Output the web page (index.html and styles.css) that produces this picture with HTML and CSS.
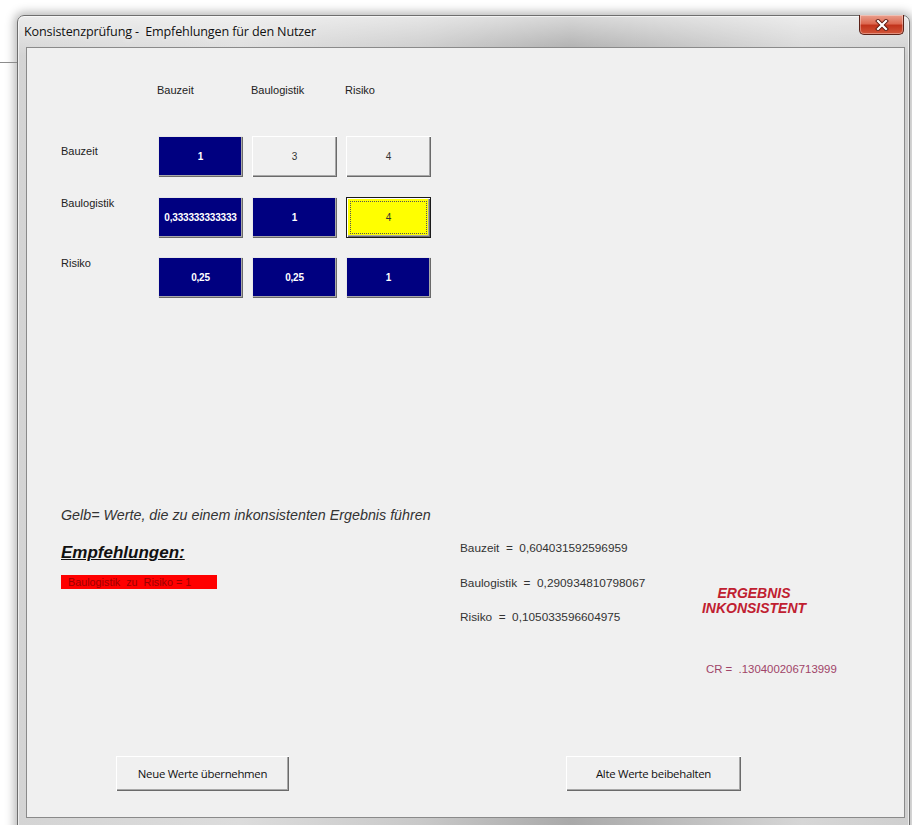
FILE: index.html
```html
<!DOCTYPE html>
<html lang="de">
<head>
<meta charset="utf-8">
<title>Konsistenzprüfung</title>
<link rel="stylesheet" href="styles.css">
</head>
<body>
<div class="window">
  <div class="titlebar">
    <span class="title">Konsistenzprüfung -&nbsp; Empfehlungen für den Nutzer</span>
    <button class="close" type="button" aria-label="Schließen">
      <svg width="14" height="12" viewBox="0 0 14 12">
        <path d="M3 2 L11 10 M11 2 L3 10" stroke="#5a1a10" stroke-width="4" stroke-linecap="square"/>
        <path d="M3 2 L11 10 M11 2 L3 10" stroke="#ffffff" stroke-width="2.2" stroke-linecap="square"/>
      </svg>
    </button>
  </div>

  <div class="client">
    <div class="matrix">
      <div class="corner"></div>
      <div class="head">Bauzeit</div>
      <div class="head">Baulogistik</div>
      <div class="head">Risiko</div>

      <div class="rowlabel rowlabel-first">Bauzeit</div>
      <div class="cell cell-navy">1</div>
      <div class="cell cell-plain">3</div>
      <div class="cell cell-plain">4</div>

      <div class="rowlabel">Baulogistik</div>
      <div class="cell cell-navy">0,333333333333</div>
      <div class="cell cell-navy">1</div>
      <div class="cell cell-warn"><span class="focus">4</span></div>

      <div class="rowlabel">Risiko</div>
      <div class="cell cell-navy">0,25</div>
      <div class="cell cell-navy">0,25</div>
      <div class="cell cell-navy">1</div>
    </div>

    <p class="note">Gelb= Werte, die zu einem inkonsistenten Ergebnis führen</p>

    <div class="lower">
      <div class="advice">
        <h2 class="advice-title">Empfehlungen:</h2>
        <div class="advice-item">Baulogistik&nbsp; zu&nbsp; Risiko = 1</div>
      </div>
      <div class="weights">
        <div class="weight">Bauzeit&nbsp; =&nbsp; 0,604031592596959</div>
        <div class="weight">Baulogistik&nbsp; =&nbsp; 0,290934810798067</div>
        <div class="weight">Risiko&nbsp; =&nbsp; 0,105033596604975</div>
      </div>
      <div class="verdict">
        <div class="verdict-text">ERGEBNIS<br>INKONSISTENT</div>
        <div class="cr">CR =&nbsp; .130400206713999</div>
      </div>
    </div>

    <div class="actions">
      <button class="btn btn-new" type="button">Neue Werte übernehmen</button>
      <button class="btn btn-old" type="button">Alte Werte beibehalten</button>
    </div>
  </div>
</div>
</body>
</html>
```
FILE: styles.css
```css
html, body {
  margin: 0;
  height: 100%;
}

body {
  background: #ffffff;
  padding: 15px 0 0 17px;
  box-sizing: border-box;
  overflow: hidden;
  position: relative;
  font-family: "Liberation Sans", Arial, sans-serif;
  color: #222;
}

/* line of the desktop item peeking out behind the window */
body::before {
  content: "";
  position: absolute;
  left: 0;
  top: 62px;
  width: 17px;
  height: 1px;
  background: #8c8c8c;
}

/* ---------- window frame ---------- */
.window {
  width: 893px;
  height: 820px;
  box-sizing: border-box;
  border: 1px solid #6e6e6e;
  border-radius: 7px 7px 0 0;
  background:
    linear-gradient(180deg, rgba(255,255,255,0.55) 0px, rgba(255,255,255,0) 40px),
    linear-gradient(90deg, #d4d4d4 0%, #dcdcdc 25%, #c9c9c9 45%, #a9a9a9 62%, #bdbdbd 74%, #d6d6d6 88%, #cfcfcf 100%);
  box-shadow: 0 0 10px 3px rgba(0,0,0,0.28), inset 0 0 0 1px rgba(255,255,255,0.6);
  padding: 0 4px 0 8px;
  display: flex;
  flex-direction: column;
}

.titlebar {
  height: 31px;
  display: flex;
  align-items: flex-start;
  flex: none;
}

.title {
  font-family: "Open Sans", "Noto Sans", sans-serif;
  font-size: 12.6px;
  color: #111;
  margin: 7px 0 0 -2px;
  letter-spacing: -0.15px;
  text-shadow: 0 0 6px rgba(255,255,255,0.9);
}

.close {
  margin-left: auto;
  margin-top: -1px;
  margin-right: 1px;
  width: 45px;
  height: 20px;
  padding: 0;
  border: 1px solid #5b2218;
  border-top: none;
  border-radius: 0 0 5px 5px;
  background: linear-gradient(180deg, #eaa08e 0%, #dd6a52 45%, #c2341c 55%, #d2563a 100%);
  box-shadow: inset 0 0 0 1px rgba(255,255,255,0.35);
  display: flex;
  align-items: center;
  justify-content: center;
}

/* ---------- client area ---------- */
.client {
  height: 771px;
  box-sizing: border-box;
  background: #f0f0f0;
  border: 1px solid #8a8a8a;
  padding: 35px 0 0 34px;
  display: flex;
  flex-direction: column;
}

.matrix {
  display: grid;
  grid-template-columns: 88px 85px 85px 85px;
  grid-template-rows: 33.5px 41px 41px 41px;
  column-gap: 9px;
  row-gap: 19.5px;
  align-items: start;
  font-size: 11px;
}

.head {
  line-height: 14px;
  color: #222;
  margin-left: -1px;
}

.rowlabel {
  line-height: 12px;
  color: #222;
}

.rowlabel-first {
  padding-top: 9px;
}

.cell {
  height: 41px;
  box-sizing: border-box;
  display: flex;
  align-items: center;
  justify-content: center;
  font-size: 10px;
  font-weight: bold;
  letter-spacing: -0.2px;
}

.cell-navy {
  background: #000080;
  color: #ffffff;
  box-shadow: inset 1px 1px 0 #e8e8e8, inset -1px -1px 0 #6a6a6a, inset -2px -2px 0 #a8a8a8;
}

.cell-plain {
  background: #f0f0f0;
  color: #333;
  font-weight: normal;
  box-shadow: inset 1px 1px 0 #ffffff, inset -1px -1px 0 #6a6a6a, inset -2px -2px 0 #a8a8a8;
}

.cell-warn {
  background: #ffff00;
  color: #333;
  font-weight: normal;
  border: 1px solid #1a1a1a;
  box-shadow: inset 1px 1px 0 #ffffff, inset -1px -1px 0 #6a6a6a, inset -2px -2px 0 #a8a8a8;
  padding: 3px;
}

.focus {
  flex: 1;
  align-self: stretch;
  display: flex;
  align-items: center;
  justify-content: center;
  border: 1px dotted #555;
}

/* ---------- lower part ---------- */
.note {
  margin: 209px 0 0 0;
  font-size: 14.3px;
  line-height: 16px;
  font-style: italic;
  color: #333;
}

.lower {
  margin-top: 18px;
  display: grid;
  grid-template-columns: 399px 241px 180px;
  align-items: start;
}

.advice-title {
  margin: 2px 0 0 0;
  font-size: 17px;
  line-height: 20px;
  font-weight: bold;
  font-style: italic;
  text-decoration: underline;
  color: #111;
}

.advice-item {
  margin-top: 12px;
  width: 156px;
  height: 14px;
  box-sizing: border-box;
  padding-left: 7px;
  background: #ff0000;
  color: #9a0000;
  font-size: 10.8px;
  line-height: 14px;
}

.weights {
  display: flex;
  flex-direction: column;
  gap: 20.5px;
  font-size: 11.8px;
  line-height: 14px;
  color: #333;
}

.verdict-text {
  margin-top: 44.5px;
  width: 106px;
  text-align: center;
  font-size: 14px;
  line-height: 15px;
  font-weight: bold;
  font-style: italic;
  color: #c02030;
}

.cr {
  margin: 46.5px 0 0 5px;
  font-size: 11.4px;
  line-height: 14px;
  color: #a04468;
}

/* ---------- buttons ---------- */
.actions {
  margin: 80px 0 0 55px;
  display: flex;
  gap: 277px;
}

.btn {
  height: 35px;
  padding: 0;
  background: #f0f0f0;
  border: none;
  box-shadow: inset 1px 1px 0 #ffffff, inset -1px -1px 0 #6a6a6a, inset -2px -2px 0 #a8a8a8;
  font-family: "Open Sans", "Noto Sans", sans-serif;
  font-size: 11.4px;
  letter-spacing: -0.3px;
  color: #111;
}

.btn-new {
  width: 173px;
}

.btn-old {
  width: 175px;
}
```
